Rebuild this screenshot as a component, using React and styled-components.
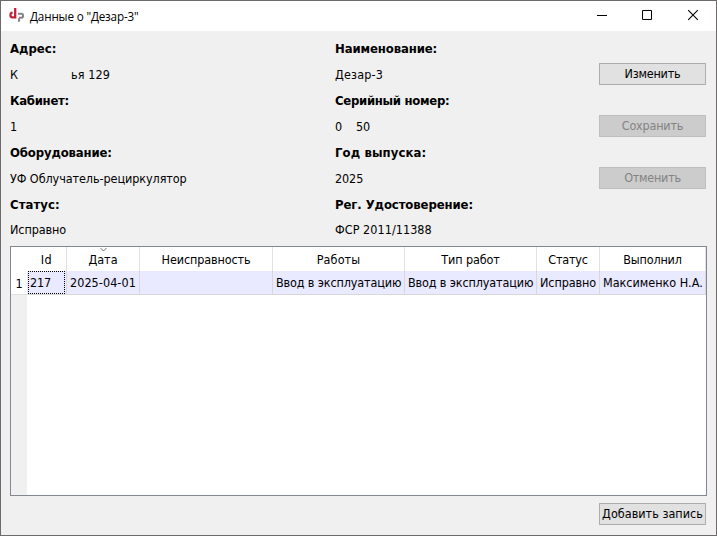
import React from "react";
import styled, { createGlobalStyle } from "styled-components";

const GlobalStyle = createGlobalStyle`
  * { box-sizing: border-box; }
  body { margin: 0; overflow: hidden; }
`;

const Window = styled.div`
  width: 717px;
  height: 536px;
  display: flex;
  flex-direction: column;
  border: 1px solid #6e6a6c;
  background: #f0f0f0;
  color: #000;
  font-family: "DejaVu Sans Condensed", "DejaVu Sans", sans-serif;
  font-size: 12.5px;
  white-space: pre;
`;

const TitleBar = styled.header`
  display: flex;
  align-items: center;
  height: 30px;
  flex: none;
  padding-left: 7px;
  background: #fff;
`;

const Logo = styled.svg`
  width: 18px;
  height: 18px;
  margin-right: 4px;
`;

const Title = styled.h1`
  flex: 1;
  margin: 0;
  font: 400 11.7px/30px "Open Sans", "Noto Sans", sans-serif;
  letter-spacing: -0.17px;
`;

const Captions = styled.div`
  display: flex;
  align-self: flex-start;
`;

const CaptionButton = styled.button`
  width: 46px;
  height: 28px;
  padding: 0;
  border: 0;
  background: none;
  display: flex;
  align-items: center;
  justify-content: center;
  svg {
    width: 10px;
    height: 10px;
    overflow: visible;
  }
`;

const Content = styled.main`
  flex: 1;
  display: flex;
  flex-direction: column;
  padding: 5px 9px 10px;
`;

const Details = styled.section`
  display: grid;
  grid-template-columns: 325px 264px 107px;
  height: 210px;
  flex: none;
`;

const Column = styled.div`
  display: flex;
  flex-direction: column;
`;

const Label = styled.div`
  height: 26px;
  font-weight: 700;
  font-size: 13px;
  line-height: 25px;
  letter-spacing: ${(p) => p.$track || 0}px;
`;

const Value = styled.div`
  display: flex;
  height: 26px;
  line-height: 25px;
  letter-spacing: ${(p) => p.$track || 0}px;
  &:last-child { line-height: 24px; }
`;

const Blank = styled.span`
  width: ${(p) => p.$width}px;
`;

const Actions = styled.div`
  display: flex;
  flex-direction: column;
  gap: 30px;
  padding-top: 27px;
`;

const PushButton = styled.button`
  width: 107px;
  height: 22px;
  padding: 0;
  flex: none;
  border: 1px solid #adadad;
  background: #e1e1e1;
  color: #000;
  font: inherit;
  line-height: 20px;
  letter-spacing: ${(p) => p.$track || 0}px;
  &:disabled {
    border-color: #bfbfbf;
    background: #ccc;
    color: #838383;
  }
`;

const TableView = styled.section`
  width: 697px;
  height: 250px;
  display: flex;
  flex-direction: column;
  border: 1px solid #828790;
  background: #fff;
`;

const TableRow = styled.div`
  display: grid;
  grid-template-columns: 16px 40px 73px 133px 132px 132px 63px 106px;
  grid-template-rows: 24px;
  flex: none;
`;

const Corner = styled.div`
  background: #fff;
`;

const HeaderCell = styled.div`
  position: relative;
  border-right: 1px solid #e1e1e1;
  text-align: center;
  line-height: 25px;
  letter-spacing: ${(p) => p.$track || 0}px;
`;

const SortArrow = styled.svg`
  position: absolute;
  top: 0;
  left: 33px;
  width: 7px;
  height: 5px;
`;

const RowHeader = styled.div`
  text-align: center;
  line-height: 25px;
  border-bottom: 1px solid #e1e1e1;
`;

const Cell = styled.div`
  display: flex;
  padding-left: 3px;
  border-right: 1px solid #d8d8d8;
  border-bottom: 1px solid #d8d8d8;
  background: #e9e9ff;
  line-height: 23px;
  letter-spacing: ${(p) => p.$track || 0}px;
`;

const FocusedCell = styled(Cell)`
  padding: 0 1px;
`;

const FocusFrame = styled.span`
  flex: 1;
  height: 23px;
  padding-left: 1px;
  border: 1px dotted #000;
  line-height: 21px;
`;

const RowGutter = styled.div`
  flex: 1;
  width: 16px;
  background: #f0f0f0;
`;

const Footer = styled.footer`
  display: flex;
  justify-content: flex-end;
  padding: 7px 1px 0 0;
`;

const headers = [
  ["Id", 0.6],
  ["Дата", 0],
  ["Неисправность", -0.13],
  ["Работы", 0.1],
  ["Тип работ", -0.1],
  ["Статус", -0.2],
  ["Выполнил", -0.2],
];

const cells = [
  ["2025-04-01", 0.05],
  ["", 0],
  ["Ввод в эксплуатацию", -0.14],
  ["Ввод в эксплуатацию", -0.14],
  ["Исправно", -0.1],
  ["Максименко Н.А.", -0.02],
];

export default function App() {
  return (
    <>
      <GlobalStyle />
      <Window>
        <TitleBar>
          <Logo viewBox="0 0 18 18" fill="none">
            <path d="M7.2 1V10.4H4.4Q2.5 10.4 2.5 8.6V7.6Q2.5 5.8 4.6 5.6" stroke="#c4203b" strokeWidth="2.3" />
            <path d="M11 14.7V11.2M10 6.8H13.2Q15 6.8 15 8.4V9Q15 10.8 13 10.8H11" stroke="#85858a" strokeWidth="2.1" />
          </Logo>
          <Title>Данные о "Дезар-3"</Title>
          <Captions>
            <CaptionButton aria-label="Свернуть">
              <svg viewBox="0 0 10 10"><path d="M1 5.5H11" stroke="#000" /></svg>
            </CaptionButton>
            <CaptionButton aria-label="Развернуть">
              <svg viewBox="0 0 10 10"><path d="M.5 .5H9.5V9.5H.5Z" fill="none" stroke="#000" /></svg>
            </CaptionButton>
            <CaptionButton aria-label="Закрыть">
              <svg viewBox="0 0 10 10"><path d="M.2 .2L9.8 9.8M9.8 .2L.2 9.8" stroke="#000" strokeWidth="1.1" /></svg>
            </CaptionButton>
          </Captions>
        </TitleBar>
        <Content>
          <Details>
            <Column>
              <Label>Адрес:</Label>
              <Value $track={0.1}>К<Blank $width={53} />ья 129</Value>
              <Label $track={-0.3}>Кабинет:</Label>
              <Value>1</Value>
              <Label $track={-0.15}>Оборудование:</Label>
              <Value $track={-0.08}>УФ Облучатель-рециркулятор</Value>
              <Label $track={0.07}>Статус:</Label>
              <Value $track={-0.1}>Исправно</Value>
            </Column>
            <Column>
              <Label $track={-0.12}>Наименование:</Label>
              <Value $track={0.15}>Дезар-3</Value>
              <Label $track={-0.3}>Серийный номер:</Label>
              <Value $track={-0.2}>0<Blank $width={14} />50</Value>
              <Label $track={0.1}>Год выпуска:</Label>
              <Value $track={-0.1}>2025</Value>
              <Label $track={-0.1}>Рег. Удостоверение:</Label>
              <Value $track={0.05}>ФСР 2011/11388</Value>
            </Column>
            <Actions>
              <PushButton $track={-0.2}>Изменить</PushButton>
              <PushButton $track={-0.2} disabled>Сохранить</PushButton>
              <PushButton $track={-0.25} disabled>Отменить</PushButton>
            </Actions>
          </Details>
          <TableView>
            <TableRow>
              <Corner />
              {headers.map(([text, track]) => (
                <HeaderCell key={text} $track={track}>
                  {text}
                  {text === "Дата" && (
                    <SortArrow viewBox="0 0 7 5">
                      <path d="M.5 1L3.5 4L6.5 1" fill="none" stroke="#777" />
                    </SortArrow>
                  )}
                </HeaderCell>
              ))}
            </TableRow>
            <TableRow>
              <RowHeader>1</RowHeader>
              <FocusedCell $track={-0.2}>
                <FocusFrame>217</FocusFrame>
              </FocusedCell>
              {cells.map(([text, track], i) => (
                <Cell key={i} $track={track}>{text}</Cell>
              ))}
            </TableRow>
            <RowGutter />
          </TableView>
          <Footer>
            <PushButton $track={0.02}>Добавить запись</PushButton>
          </Footer>
        </Content>
      </Window>
    </>
  );
}
